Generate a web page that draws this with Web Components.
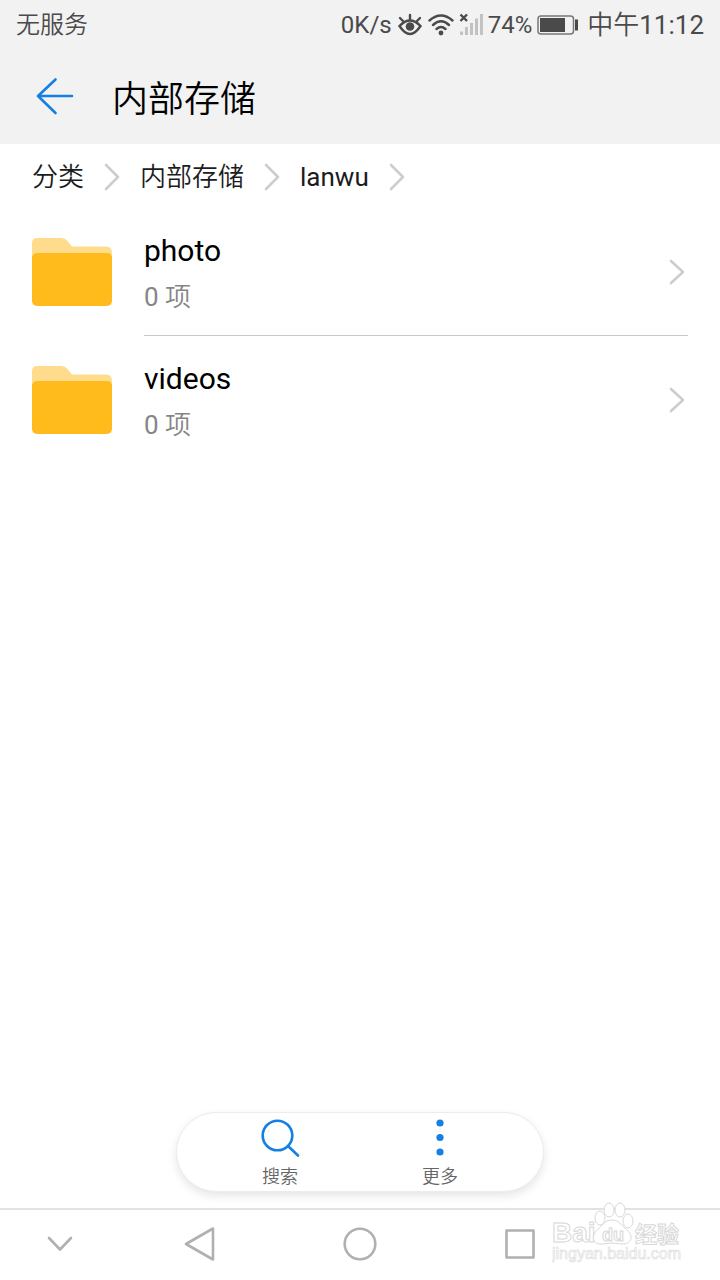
<!DOCTYPE html>
<html lang="zh-CN">
<head>
<meta charset="utf-8">
<meta name="viewport" content="width=device-width, initial-scale=1">
<title>内部存储</title>
<style>
    body {
        margin: 0;
        font-family: Roboto, "Noto Sans CJK SC", sans-serif;
        background: #fff; color: #000;
    }
</style>
</head>
<body>
<file-manager>
    <status-bar slot="top" carrier="无服务" speed="0K/s" battery="74" time="中午11:12"></status-bar>
    <title-bar slot="top">内部存储</title-bar>
    <path-trail path="分类/内部存储/lanwu"></path-trail>
    <folder-list>
        <folder-row name="photo" count="0"></folder-row>
        <folder-row name="videos" count="0"></folder-row>
    </folder-list>
    <action-pill slot="bottom">
        <action-button icon="search">搜索</action-button>
        <action-button icon="more">更多</action-button>
    </action-pill>
    <system-nav slot="bottom"></system-nav>
</file-manager>

<script>
const define = (name, markup) =>
    customElements.define(name, class extends HTMLElement {
        constructor() {
            super();
            this.attachShadow( {mode: 'open'} );
        }
        connectedCallback() {
            this.shadowRoot.innerHTML = markup(this);
        }
    });

// Chinese runs are set a little lighter than the Latin letters and digits beside them
const mixed = text => text.replace(/[\u4e00-\u9fff]+/g, run => `<span style="font-weight: 350">${run}</span>`);

const chevron = (w, h) => `
    <svg width="${w}" height="${h}" viewBox="0 0 ${w} ${h}" fill="none" stroke="#cdcdcd" stroke-width="2.6" stroke-linecap="round" stroke-linejoin="round" aria-hidden="true">
        <path d="M2 2 L${w-2} ${h/2} L2 ${h-2}"/>
    </svg>`;

define('file-manager', () => `
    <style>
        :host { display: flex; flex-direction: column; min-height: 100vh; }
        main { flex: 1; }
        footer { position: sticky; bottom: 0; }
    </style>
    <header><slot name="top"></slot></header>
    <main><slot></slot></main>
    <footer><slot name="bottom"></slot></footer>`);

define('status-bar', host => `
    <style>
        :host {
            display: flex; align-items: center; justify-content: space-between;
            height: 50px; padding: 0 16px;
            background: #f2f2f2; color: #4a4a4a;
            font-size: 24px; line-height: 32px; white-space: nowrap;
        }
        .right { display: flex; align-items: center; gap: 5px; }
        .time { font-size: 26px; margin-left: 3px; }
        svg { display: block; }
    </style>
    <span>${mixed(host.getAttribute('carrier'))}</span>
    <div class="right">
        <span>${host.getAttribute('speed')}</span>
        <svg width="26" height="24" viewBox="0 0 26 24" fill="none" stroke="#4a4a4a" stroke-width="2.4" stroke-linecap="round" aria-hidden="true">
            <path d="M2.500 13Q13 2 23.500 13Q13 29 2.500 13Z"/>
            <path d="M13 6V2M6 8L3 5M20 8L23 5"/>
            <circle cx="13" cy="13.500" r="4.300" fill="#4a4a4a" stroke="none"/>
        </svg>
        <svg width="26" height="24" viewBox="0 0 26 24" fill="none" stroke="#4a4a4a" stroke-width="2.4" stroke-linecap="round" aria-hidden="true">
            <path d="M1.500 7.500Q13-2.500 24.500 7.500M5 12Q13 4.500 21 12M8.500 16Q13 12 17.500 16"/>
            <circle cx="13" cy="20" r="2.400" fill="#4a4a4a" stroke="none"/>
        </svg>
        <svg width="24" height="24" viewBox="0 0 24 24" aria-hidden="true">
            <path d="M1.500 1.500L8 8M8 1.500L1.500 8" stroke="#4a4a4a" stroke-width="2.400"/>
            <path d="M2.500 18.500V22M7.500 14V22M12.500 10V22M17.500 5.500V22M22.500 1V22" stroke="#c2c2c2" stroke-width="3"/>
        </svg>
        <span>${host.getAttribute('battery')}%</span>
        <svg width="42" height="20" viewBox="0 0 42 20" aria-hidden="true">
            <rect x="1" y="1" width="35.500" height="18" rx="3" fill="none" stroke="#777" stroke-width="1.500"/>
            <rect x="3" y="3" width="25" height="14" fill="#4a4a4a"/>
            <rect x="38" y="4.500" width="3" height="11" fill="#4a4a4a"/>
        </svg>
        <span class="time">${mixed(host.getAttribute('time'))}</span>
    </div>`);

define('title-bar', () => `
    <style>
        :host {
            display: flex; align-items: center; gap: 36px;
            height: 94px; padding: 0 32px;
            background: #f2f2f2;
        }
        button { display: flex; padding: 0; border: 0; background: none; }
        h1 { margin: 6px 0 0; font-size: 36px; line-height: 48px; font-weight: 350; }
    </style>
    <button type="button" aria-label="返回">
        <svg width="44" height="44" viewBox="0 0 44 44" fill="none" stroke="#157fe4" stroke-width="2.6" stroke-linecap="round" stroke-linejoin="round">
            <path d="M40 21H6M23.500 4.500L6 21L23.500 38"/>
        </svg>
    </button>
    <h1><slot></slot></h1>`);

define('path-trail', host => `
    <style>
        :host { display: block; padding: 16px 32px 14px; }
        nav { display: flex; align-items: center; gap: 20px; }
        a { color: #1c1c1c; text-decoration: none; font-size: 26px; line-height: 34px; }
    </style>
    <nav aria-label="路径">
        ${host.getAttribute('path').split('/').map(part => `<a href="#">${mixed(part)}</a>${chevron(16, 28)}`).join('')}
    </nav>`);

define('folder-list', () => `
    <style>
        :host { display: block; }
        ::slotted(:not(:last-child)) { --line: #c9c9c9; }
    </style>
    <slot></slot>`);

define('folder-row', host => `
    <style>
        :host { display: block; padding: 0 32px; }
        a { display: flex; gap: 32px; color: inherit; text-decoration: none; }
        .folder { flex: none; margin-top: 29px; }
        .body {
            flex: 1; display: flex; align-items: center; justify-content: space-between;
            box-sizing: border-box; height: 128px; padding-right: 3px;
            border-bottom: 1px solid var(--line, transparent);
        }
        .text { display: grid; gap: 8px; padding-top: 4px; }
        .name { font-size: 30px; line-height: 38px; }
        .count { font-size: 26px; line-height: 38px; color: #868686; }
    </style>
    <a href="#">
        <svg class="folder" width="80" height="70" viewBox="0 0 80 70" aria-hidden="true">
            <path d="M0 24V6Q0 1 5 1H30Q33 1 35 3.500L40 9.500H74Q80 9.500 80 16V24Z" fill="#ffdc8c"/>
            <rect y="16" width="80" height="53" rx="5" fill="#ffba1c"/>
        </svg>
        <div class="body">
            <div class="text">
                <span class="name">${host.getAttribute('name')}</span>
                <span class="count">${mixed(host.getAttribute('count') + ' 项')}</span>
            </div>
            ${chevron(16, 26)}
        </div>
    </a>`);

define('action-pill', () => `
    <style>
        :host {
            display: flex; justify-content: center;
            box-sizing: border-box; width: fit-content; height: 80px;
            margin: 0 auto 16px; padding: 0 23px;
            border: 1px solid #ececec; border-radius: 40px;
            background: #fff; box-shadow: 0 4px 10px rgba(0,0,0,.1);
        }
    </style>
    <slot></slot>`);

const actionIcons = {
    search: `<g fill="none" stroke="#157fe4" stroke-width="2.6" stroke-linecap="round"><circle cx="17.500" cy="17.500" r="14.800"/><path d="M28.500 28.500L38 37.500"/></g>`,
    more: `<g fill="#157fe4"><circle cx="20" cy="5" r="3.600"/><circle cx="20" cy="19.500" r="3.600"/><circle cx="20" cy="34" r="3.600"/></g>`
};
define('action-button', host => `
    <style>
        :host { display: block; width: 160px; }
        button {
            display: flex; flex-direction: column; align-items: center; gap: 7px;
            width: 100%; padding: 5px 0 0; border: 0; background: none;
            font: 350 18px/24px Roboto, "Noto Sans CJK SC", sans-serif; color: #666;
        }
    </style>
    <button type="button">
        <svg width="40" height="40" viewBox="0 0 40 40" aria-hidden="true">${actionIcons[host.getAttribute('icon')]}</svg>
        <slot></slot>
    </button>`);

define('system-nav', () => `
    <style>
        :host {
            display: grid; grid-template-columns: 3fr 4fr 4fr 4fr 3fr;
            position: relative; box-sizing: border-box; height: 72px;
            border-top: 2px solid #e2e2e2;
        }
        button { display: grid; place-items: center; padding: 0 0 2px; border: 0; background: none; }
        svg { fill: none; stroke: #b0b0b0; stroke-width: 2.6; stroke-linejoin: round; stroke-linecap: round; }
        water-mark { position: absolute; right: 36px; bottom: 8px; }
    </style>
    <button type="button" aria-label="收起"><svg width="36" height="36"><path d="M7 12L18 23.500L29 12"/></svg></button>
    <button type="button" aria-label="后退"><svg width="36" height="36"><path d="M31 2.500V33.500L4 18Z"/></svg></button>
    <button type="button" aria-label="主页"><svg width="36" height="36"><circle cx="18" cy="18" r="15.300"/></svg></button>
    <button type="button" aria-label="最近任务"><svg width="36" height="36"><rect x="4.500" y="4.500" width="27" height="27"/></svg></button>
    <water-mark></water-mark>`);

define('water-mark', () => `
    <style>
        :host { display: block; pointer-events: none; }
        svg { display: block; fill: #fff; stroke: #d8d8d8; stroke-width: 1; }
        text { font-family: "Liberation Sans", "Noto Sans CJK SC", sans-serif; font-weight: bold; }
        .url { font-weight: normal; stroke: #dedede; stroke-width: .7; }
    </style>
    <svg width="132" height="72" viewBox="0 0 132 72">
        <text x="0" y="42" font-size="28">Bai</text>
        <path d="M60 20C67 20 69 25 74 29C83 36 79 45 70 44Q60 42 50 44C41 45 38 36 46 29C51 25 53 20 60 20Z"/>
        <ellipse cx="48" cy="18" rx="5" ry="7"/>
        <ellipse cx="57" cy="10" rx="5" ry="7"/>
        <ellipse cx="68" cy="10" rx="5" ry="7"/>
        <ellipse cx="76" cy="21" rx="5" ry="7"/>
        <text x="50" y="41" font-size="18">du</text>
        <text x="83" y="42" font-size="22">经验</text>
        <text class="url" x="0" y="59" font-size="16">jingyan.baidu.com</text>
    </svg>`);
</script>
</body>
</html>
